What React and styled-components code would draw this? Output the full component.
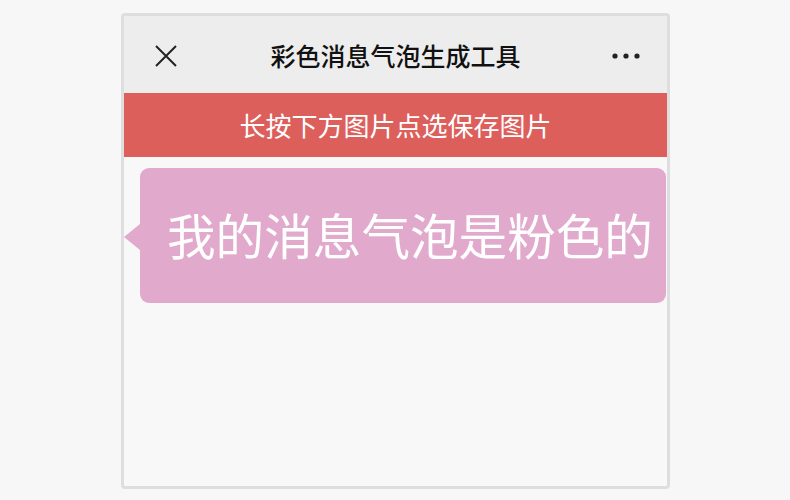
import styled, { createGlobalStyle } from "styled-components";

const GlobalStyle = createGlobalStyle`
  html, body {
    margin: 0;
    padding: 0;
    background: #f7f7f7;
    font-family: "Noto Sans CJK SC", "Noto Sans", sans-serif;
  }
`;

const Frame = styled.div`
  box-sizing: border-box;
  width: 549px;
  height: 476px;
  margin: 13px 0 0 121px;
  border: 3px solid #dedede;
  border-radius: 4px;
  background: #f8f8f8;
  display: flex;
  flex-direction: column;
  overflow: hidden;
`;

const Header = styled.div`
  height: 77px;
  background: #ededed;
  display: grid;
  grid-template-columns: 80px 1fr 80px;
  align-items: center;
`;

const IconSlot = styled.div`
  display: flex;
  justify-content: ${(p) => p.$align};
  padding: ${(p) => p.$pad};
`;

const Title = styled.h1`
  margin: 0;
  text-align: center;
  font-size: 25px;
  font-weight: 500;
  color: #111;
  padding-top: 1px;
`;

const Notice = styled.div`
  height: 64px;
  background: #dd5f5c;
  color: #fff;
  font-size: 26px;
  font-weight: 400;
  display: flex;
  align-items: center;
  justify-content: center;
  padding-bottom: 2px;
  box-sizing: border-box;
`;

const Content = styled.div`
  flex: 1;
  padding: 11px 0 0 16px;
`;

const Bubble = styled.div`
  position: relative;
  height: 135px;
  margin-right: 1px;
  background: #e1a9cc;
  border-radius: 9px;
  color: #fff;
  font-size: 48.6px;
  font-weight: 400;
  display: flex;
  align-items: center;
  padding: 0 0 4px 27px;
  box-sizing: border-box;
  white-space: nowrap;

  &::before {
    content: "";
    position: absolute;
    left: -16px;
    top: 56px;
    border-style: solid;
    border-width: 13px 16px 13px 0;
    border-color: transparent #e1a9cc transparent transparent;
  }
`;

const CloseIcon = () => (
  <svg width="24" height="24" viewBox="0 0 24 24">
    <path d="M2 2L22 22M22 2L2 22" stroke="#222" strokeWidth="2" fill="none" />
  </svg>
);

const MoreIcon = () => (
  <svg width="30" height="8" viewBox="0 0 30 8">
    <circle cx="4" cy="4" r="2.6" fill="#222" />
    <circle cx="15" cy="4" r="2.6" fill="#222" />
    <circle cx="26" cy="4" r="2.6" fill="#222" />
  </svg>
);

export default function App() {
  return (
    <>
      <GlobalStyle />
      <Frame>
        <Header>
          <IconSlot $align="flex-start" $pad="2px 0 0 30px">
            <CloseIcon />
          </IconSlot>
          <Title>彩色消息气泡生成工具</Title>
          <IconSlot $align="flex-end" $pad="2px 26px 0 0">
            <MoreIcon />
          </IconSlot>
        </Header>
        <Notice>长按下方图片点选保存图片</Notice>
        <Content>
          <Bubble>我的消息气泡是粉色的</Bubble>
        </Content>
      </Frame>
    </>
  );
}
